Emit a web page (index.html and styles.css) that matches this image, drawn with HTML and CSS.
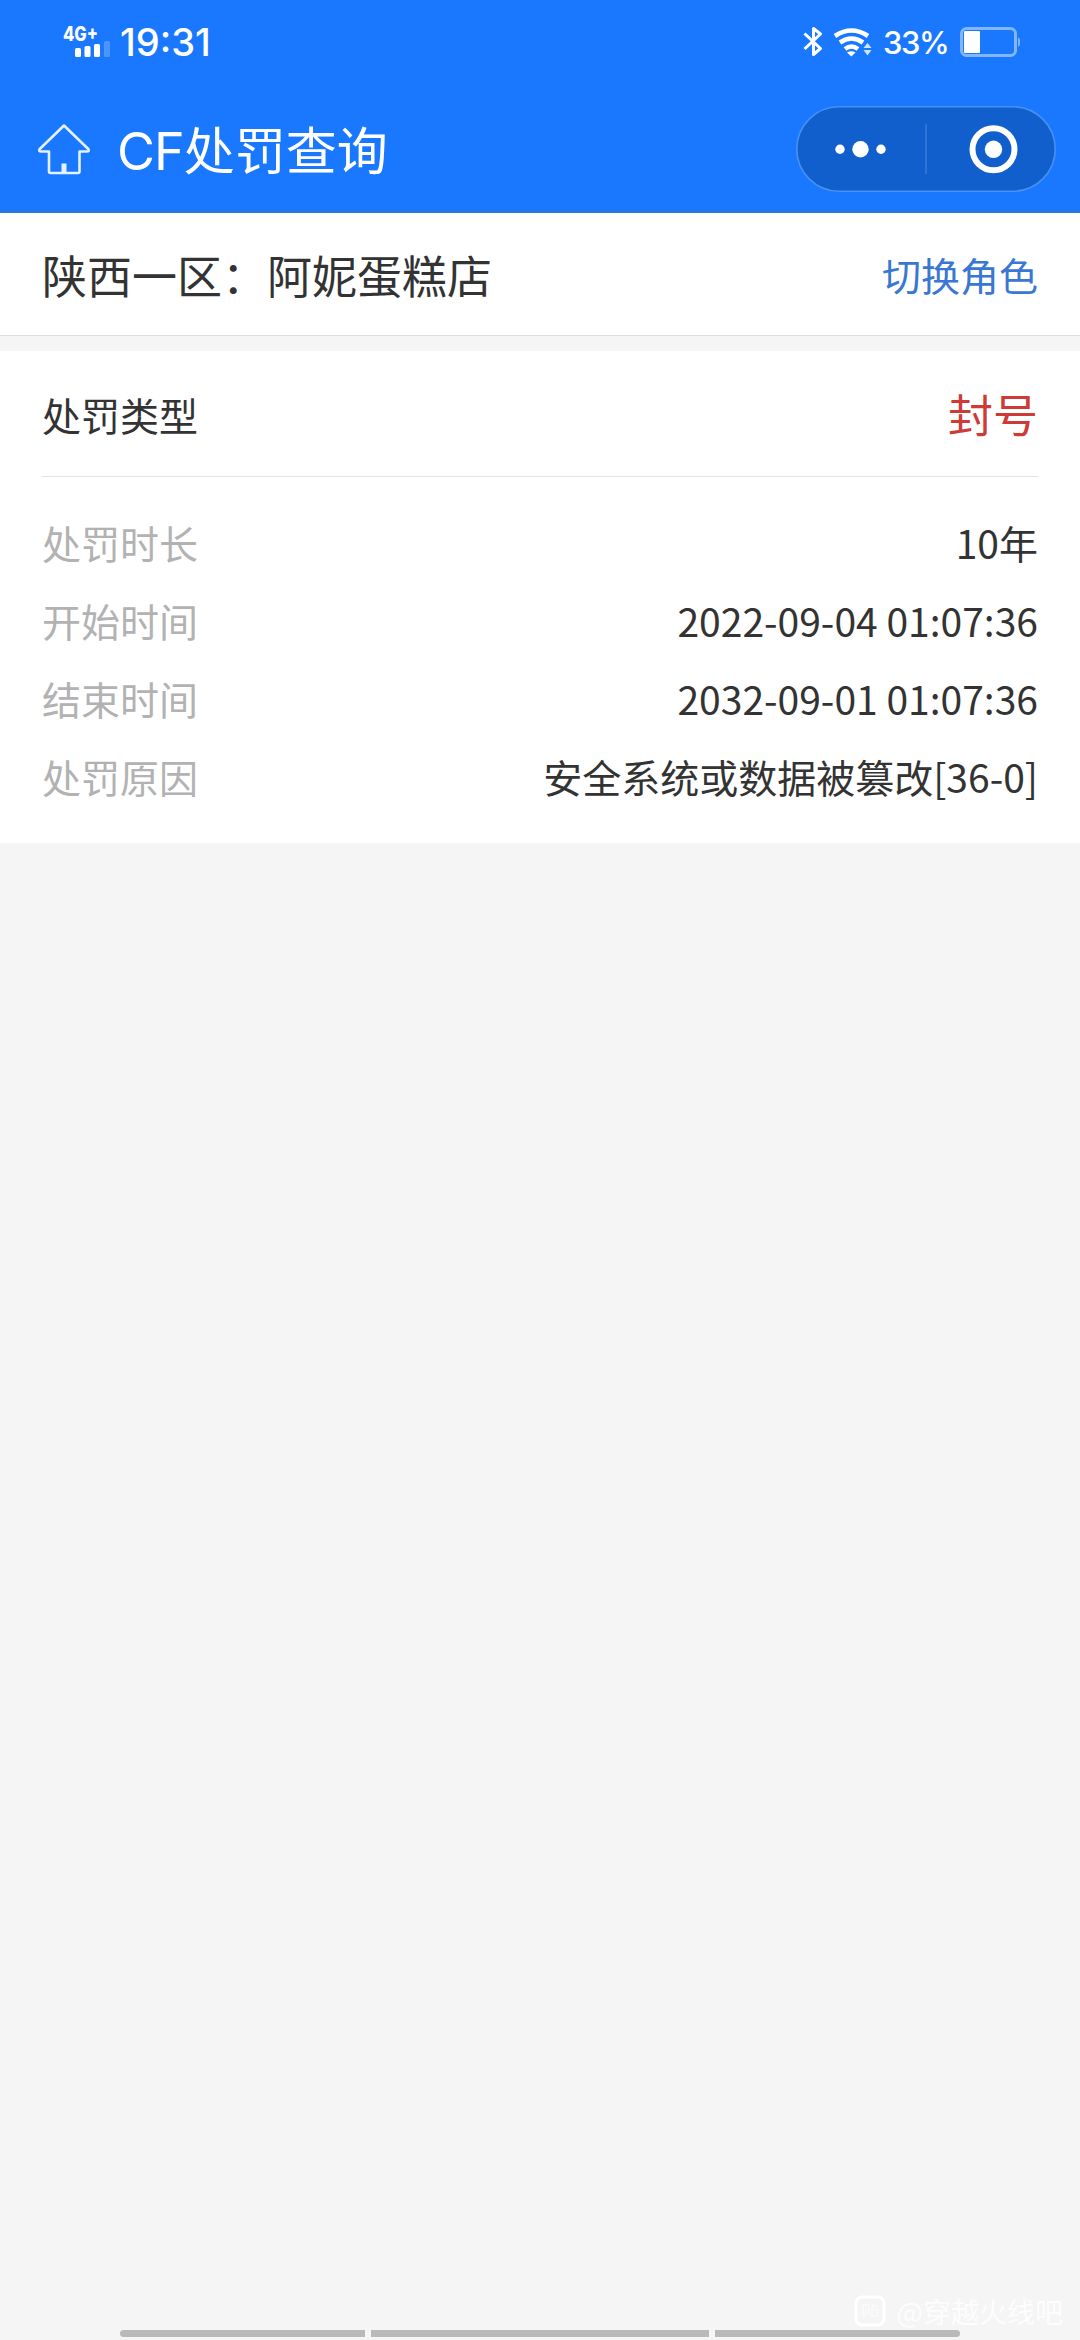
FILE: index.html
```html
<!DOCTYPE html>
<html lang="zh-CN">
<head>
	<meta charset="utf-8">
	<title>CF处罚查询</title>
	<link rel="stylesheet" href="styles.css">
</head>

<body>

	<div class="header">
		<div class="status">
			<svg class="signal" width="54" height="52" viewBox="60 15 54 52">
				<text class="network" x="63" y="40" textLength="35" lengthAdjust="spacingAndGlyphs">4G+</text>
				<g fill="#fff">
					<rect x="75" y="47" width="6" height="9" rx="1.5"/>
					<rect x="84.5" y="45" width="6" height="11" rx="1.5"/>
					<rect x="94" y="43" width="6" height="13" rx="1.5"/>
					<rect x="104" y="40" width="6" height="16" rx="1.5" opacity=".22"/>
				</g>
			</svg>
			<span class="clock">19:31</span>
			<svg class="radio" width="72" height="34" viewBox="802 25 72 34">
				<path d="M804.5 33.5L820.5 48.5L813.5 54.5V28.5L820.5 34L804.5 49" fill="none" stroke="#fff" stroke-width="3" stroke-linejoin="round"/>
				<g fill="none" stroke="#fff" stroke-width="4.6">
					<path d="M835 36Q851.5 25 868 36"/>
					<path d="M840 42.5Q851.5 34.5 863 42.5"/>
					<path d="M845 49Q851.5 44 858 49"/>
				</g>
				<path d="M847 52.5Q851.5 50 855.5 52.5L851.3 56.5Z" fill="#fff"/>
				<path d="M863.5 48L867.5 43L871.5 48ZM863.5 50L867.5 55.5L871.5 50Z" fill="#cfe3ff"/>
			</svg>
			<span class="percent">33%</span>
			<svg class="battery" width="62" height="32" viewBox="959 26 62 32">
				<rect x="961.5" y="28.5" width="54" height="27" rx="5" fill="none" stroke="#82b7ff" stroke-width="3"/>
				<rect x="964" y="31" width="16" height="22" rx="1" fill="#fff"/>
				<path d="M1018 37.5Q1020 38 1020 40V44Q1020 46 1018 46.5Z" fill="#82b7ff"/>
			</svg>
		</div>

		<div class="nav">
			<svg class="home" width="54" height="52" viewBox="37 122 54 52">
				<path d="M64 124.5L88.5 148.2Q89.5 150.5 87 150.5H79.5V170.5Q79.5 172 78 172H50.5Q49 172 49 170.5V150.5H41Q38.500 150.5 39.5 148.2Z" fill="none" stroke="#e4f1ff" stroke-width="2.6" stroke-linejoin="round"/>
				<rect x="61.500" y="162.5" width="5" height="9" fill="#e4f1ff"/>
			</svg>
			<h1 class="title"><span class="latin">CF</span>处罚查询</h1>
			<div class="capsule">
				<svg width="260" height="86" viewBox="0 0 260 86">
					<rect x=".8" y=".8" width="258.4" height="84.4" rx="42.2" fill="#105fcd" stroke="#4790f5" stroke-width="1.6"/>
					<path d="M130 18V68" stroke="#4a8be0"/>
					<g fill="#fff">
						<circle cx="44" cy="43.3" r="4.7"/>
						<circle cx="64.5" cy="43.3" r="8.2"/>
						<circle cx="85" cy="43.3" r="4.7"/>
						<circle cx="197.5" cy="43.3" r="8.7"/>
					</g>
					<circle cx="197.5" cy="43.3" r="21" fill="none" stroke="#fff" stroke-width="6"/>
				</svg>
			</div>
		</div>
	</div>

	<div class="role">
		<span>陕西一区：阿妮蛋糕店</span>
		<a class="switch">切换角色</a>
	</div>

	<div class="card">
		<div class="type">
			<span>处罚类型</span>
			<span class="ban">封号</span>
		</div>
		<div class="detail">
			<div class="row"><span class="label">处罚时长</span><span>10年</span></div>
			<div class="row"><span class="label">开始时间</span><span>2022-09-04 01:07:36</span></div>
			<div class="row"><span class="label">结束时间</span><span>2032-09-01 01:07:36</span></div>
			<div class="row"><span class="label">处罚原因</span><span>安全系统或数据被篡改[36-0]</span></div>
		</div>
	</div>

	<div class="footer">
		<div class="watermark">
			<svg width="32" height="32" viewBox="0 0 32 32">
				<rect x="2" y="2" width="28" height="28" rx="6" fill="none" stroke="#fff" stroke-width="3"/>
				<path d="M9 21V10H15V21M12 13V18L9 23M19 8V14M19 11H24M18 15H24V21H18Z" fill="none" stroke="#fafafa" stroke-width="1.5"/>
			</svg>
			<span>@穿越火线吧</span>
		</div>
		<div class="gesture">
			<i></i><i class="middle"></i><i></i>
		</div>
	</div>

</body>
</html>
```

FILE: styles.css
```css
* {
	box-sizing: border-box;
}
body {
	display: flex;
	flex-direction: column;
	height: 2340px;
	margin: 0;
	background-color: #f5f5f5;
	color: #333;
	font-family: "Noto Sans CJK SC", sans-serif;
	font-size: 39px;
	overflow: hidden;
}
svg {
	display: block;
	flex: none;
}
.header {
	height: 213px;
	background-color: #1a78ff;
	border-bottom: 2px solid #3474d2;
	color: #fff;
}
.status {
	display: flex;
	align-items: center;
	height: 84px;
	padding: 0 59px 0 60px;
	font-family: Inter, sans-serif;
	font-weight: 500;
}
.network {
	fill: #fff;
	font-family: Inter, sans-serif;
	font-size: 20px;
	font-weight: 800;
}
.clock {
	margin-left: 6px;
	font-size: 38px;
}
.radio {
	margin-left: auto;
}
.percent {
	margin-left: 9px;
	width: 76px;
	font-size: 31px;
	letter-spacing: -1.4px;
}
.nav {
	display: flex;
	align-items: center;
	height: 129px;
	padding: 0 24px 0 37px;
}
.title {
	margin: 2px 0 0 26px;
	font-size: 51px;
	font-weight: 400;
	line-height: 76px;
}
.latin {
	font-family: Inter, sans-serif;
	font-size: 52px;
	letter-spacing: -1px;
}
.capsule {
	margin-left: auto;
}
.role {
	display: flex;
	justify-content: space-between;
	align-items: center;
	height: 123px;
	padding: 0 42px;
	background-color: #fff;
	border-bottom: 1px solid #dedede;
	font-size: 45px;
}
.switch {
	color: #3977d3;
	font-size: 39px;
}
.card {
	height: 492px;
	margin-top: 15px;
	padding: 0 42px;
	background-color: #fff;
}
.type {
	display: flex;
	justify-content: space-between;
	align-items: center;
	height: 126px;
	border-bottom: 1px solid #e2e2e2;
}
.ban {
	color: #cf3936;
	font-size: 45px;
}
.detail {
	padding-top: 26px;
}
.row {
	display: flex;
	justify-content: space-between;
	line-height: 78px;
}
.label {
	color: #b2b2b2;
}
.footer {
	margin-top: auto;
}
.watermark {
	display: flex;
	justify-content: flex-end;
	align-items: center;
	gap: 11px;
	height: 36px;
	margin-bottom: 1px;
	padding-right: 17px;
	color: #fdfdfd;
	font-size: 28px;
}
.gesture {
	display: flex;
	justify-content: center;
	gap: 6px;
	padding-bottom: 3px;
}
.gesture i {
	width: 245px;
	height: 7px;
	background-color: #b9b9b9;
}
.gesture i:first-child {
	border-radius: 4px 0 0 4px;
}
.gesture i:last-child {
	border-radius: 0 4px 4px 0;
}
.gesture .middle {
	width: 338px;
}
```
